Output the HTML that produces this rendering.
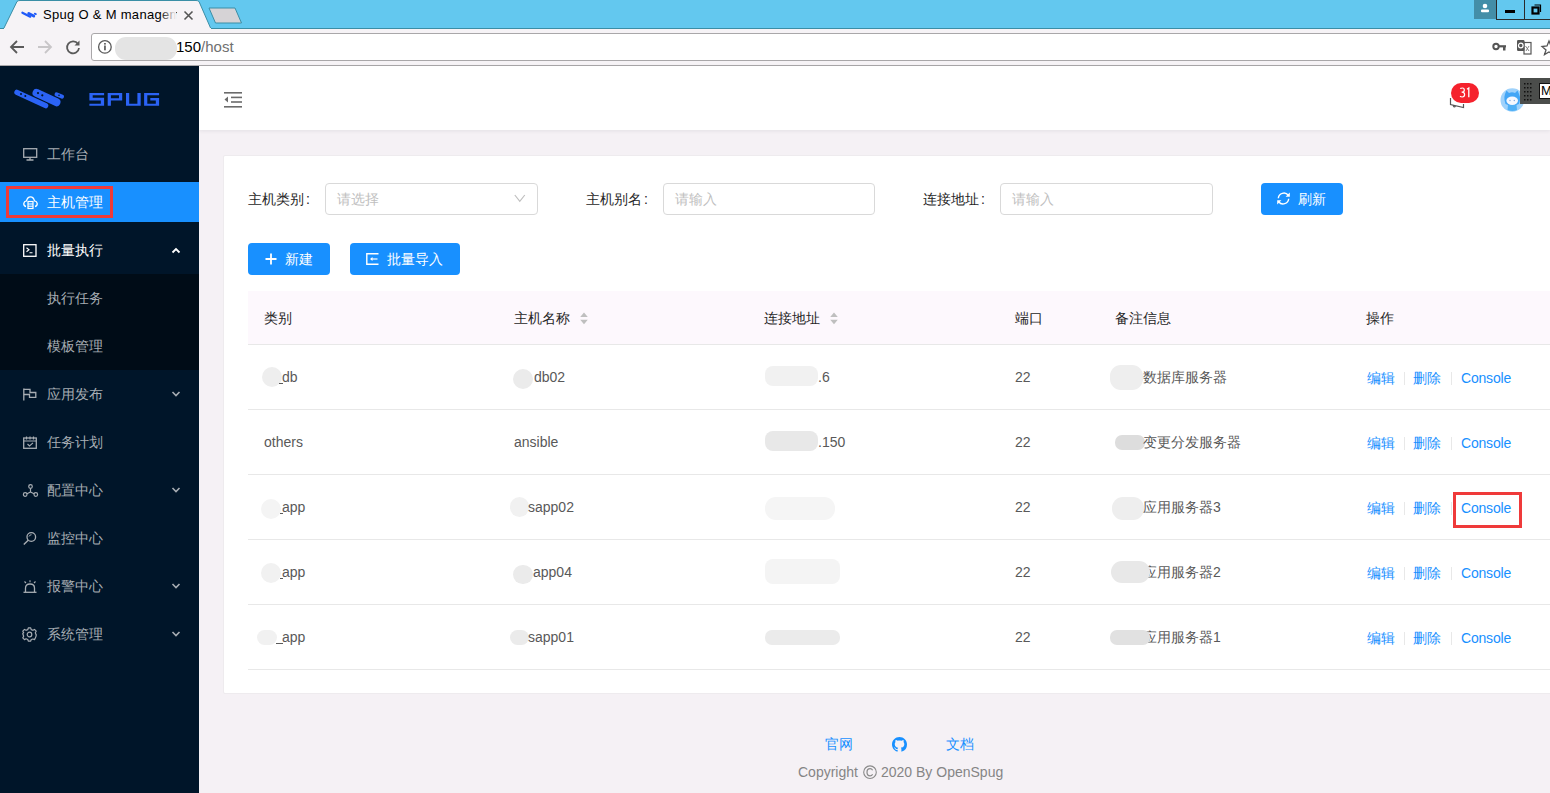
<!DOCTYPE html>
<html><head><meta charset="utf-8">
<style>
*{box-sizing:border-box;margin:0;padding:0}
html,body{width:1550px;height:793px;overflow:hidden;background:#f5f1f5;font-family:"Liberation Sans",sans-serif;font-size:14px;color:#333}
.a{position:absolute}
svg{position:absolute;overflow:visible}
#tabbar{left:0;top:0;width:1550px;height:29px;background:#63c8ef;border-bottom:1px solid #3a8ea6}
#toolbar{left:0;top:29px;width:1550px;height:37px;background:#f6f3f6;border-bottom:1px solid #aaa8aa}
#addr{left:91px;top:33px;width:1470px;height:28px;background:#fff;border:1px solid #a9a7a9;border-radius:3px}
#side{left:0;top:66px;width:199px;height:727px;background:#001529}
#sub{left:0;top:274px;width:199px;height:96px;background:#000c17}
#header{left:199px;top:66px;width:1351px;height:64px;background:#fff;box-shadow:0 1px 4px rgba(0,21,41,.08)}
#card{left:223px;top:155px;width:1340px;height:539px;background:#fff;border-radius:2px;border:1px solid #eeebee}
.mi{position:absolute;left:0;width:199px;height:40px;color:#a7adb3;font-size:14px}
.mi .t{position:absolute;left:47px;top:12px;line-height:16px;white-space:nowrap}
.sel{background:#1890ff;color:#fff}
.cell{position:absolute;line-height:16px;color:#595959;white-space:nowrap}
.hd{position:absolute;line-height:16px;color:#262626;white-space:nowrap;top:310px}
.lnk{color:#1890ff}
.hl{position:absolute;left:248px;width:1310px;height:1px;background:#e8e8e8}
.blur{position:absolute;background:#ececec;border-radius:10px}
</style></head><body>
<!-- browser chrome -->
<div id="tabbar" class="a"></div>
<svg style="left:0;top:0" width="260" height="30">
  <path d="M3.5 29 L17 1.5 Q18 0.5 20 0.5 L196 0.5 Q198 0.5 199 1.5 L211 29 Z" fill="#f6f3f6" stroke="#3a8ea6" stroke-width="1"/>
  <path d="M209 8 L235 8 L241.5 23 L215.5 23 Z" fill="#d6d3d6" stroke="#3a8ea6" stroke-width="1"/>
</svg>
<div id="toolbar" class="a"></div>
<div class="a" style="left:0;top:28px;width:1550px;height:1px;background:#3a8ea6"></div>
<div class="a" style="left:4px;top:28px;width:207px;height:2px;background:#f6f3f6"></div>
<!-- window controls -->
<div class="a" style="left:1474px;top:0;width:22px;height:19px;background:#438ea8"></div>
<svg style="left:1474px;top:0" width="22" height="19"><circle cx="11" cy="6" r="2.3" fill="#fff"/><rect x="7" y="9.5" width="8" height="2.8" rx="1" fill="#fff"/></svg>
<div class="a" style="left:1496px;top:0;width:60px;height:20px;border-left:1px solid #2a2a2a;border-bottom:1px solid #2a2a2a"></div>
<div class="a" style="left:1524px;top:0;width:1px;height:20px;background:#2a2a2a"></div>
<div class="a" style="left:1505px;top:10px;width:10px;height:3px;background:#000"></div>
<svg style="left:1530px;top:3px" width="16" height="14"><rect x="2.5" y="4.5" width="6" height="6" fill="none" stroke="#000" stroke-width="2.2"/><path d="M4.5 2 L10.5 2 L10.5 9" fill="none" stroke="#000" stroke-width="1.2"/></svg>
<!-- tab content -->
<svg style="left:20px;top:10px" width="18" height="10"><g fill="#1f5af8"><rect x="0.8" y="3.6" width="11" height="2.2" rx="1.1" transform="rotate(27 6.3 4.7)"/><rect x="7" y="3.2" width="8.5" height="3" rx="1.5" transform="rotate(27 11.2 4.7)"/><rect x="13.8" y="3" width="3" height="1.8" rx="0.9" transform="rotate(20 15.3 3.9)"/></g></svg>
<div class="a" style="left:43px;top:7px;font-size:13px;line-height:16px;color:#000;white-space:nowrap;width:134px;overflow:hidden;letter-spacing:0.3px">Spug O &amp; M management</div>
<div class="a" style="left:160px;top:6px;width:16px;height:18px;background:linear-gradient(90deg,rgba(246,243,246,0),#f6f3f6)"></div>
<svg style="left:184px;top:11px" width="9" height="9"><path d="M0.5 0.5 L8.5 8.5 M8.5 0.5 L0.5 8.5" stroke="#555" stroke-width="1.6"/></svg>
<!-- nav buttons -->
<svg style="left:9px;top:39px" width="17" height="16"><path d="M15 8 L2 8 M8 2 L2 8 L8 14" fill="none" stroke="#5a5a5a" stroke-width="1.8"/></svg>
<svg style="left:37px;top:39px" width="17" height="16"><path d="M1 8 L14 8 M8 2 L14 8 L8 14" fill="none" stroke="#c8c6c8" stroke-width="1.8"/></svg>
<svg style="left:65px;top:39px" width="17" height="16"><path d="M13 5 A6 6 0 1 0 14 9" fill="none" stroke="#5a5a5a" stroke-width="1.8"/><path d="M14.5 1.5 L14.5 6.5 L9.5 6.5 Z" fill="#5a5a5a"/></svg>
<div id="addr" class="a"></div>
<svg style="left:97px;top:39px" width="16" height="16"><circle cx="7.9" cy="7.9" r="6.3" fill="none" stroke="#5a5a5a" stroke-width="1.3"/><rect x="7.1" y="6.5" width="1.7" height="4.8" fill="#5a5a5a"/><rect x="7.1" y="4" width="1.7" height="1.6" fill="#5a5a5a"/></svg>
<div class="blur" style="left:115px;top:37px;width:62px;height:23px;background:#e4e4e4;border-radius:11px"></div>
<div class="a" style="left:176px;top:38px;font-size:15px;line-height:18px;color:#000">150<span style="color:#707070">/host</span></div>
<svg style="left:1490px;top:40px" width="18" height="14"><circle cx="6" cy="6.5" r="2.7" fill="none" stroke="#555" stroke-width="2"/><path d="M8.5 6.3 L16 6.3" stroke="#555" stroke-width="2.2"/><path d="M13 6 L13 10.5 L15.5 10.5 L15.5 6" fill="#555"/></svg>
<svg style="left:1516px;top:39px" width="17" height="17"><rect x="8" y="3.5" width="7" height="11.5" fill="#fff" stroke="#555" stroke-width="1.2"/><path d="M9.5 7 L13 12 M13 7 L10 12" stroke="#777" stroke-width="0.9"/><rect x="1" y="1" width="7.5" height="11" rx="1.2" fill="#555"/><circle cx="4.8" cy="6.5" r="2.3" fill="none" stroke="#fff" stroke-width="1.2"/></svg>
<svg style="left:1541px;top:40px" width="14" height="15"><path d="M8 1 L10 6 L15 6.5 L11 10 L12.5 14.5 L8 12 L3.5 14.5 L5 10 L1 6.5 L6 6 Z" fill="none" stroke="#555" stroke-width="1.3"/></svg>

<!-- sidebar -->
<div id="side" class="a"></div>
<div id="sub" class="a"></div>
<svg style="left:0;top:80px" width="170" height="35">
  <g fill="#2b63f5">
  <rect x="12.8" y="16.4" width="37" height="5.2" rx="2.6" transform="rotate(25 31.3 19)"/>
  <rect x="31.5" y="13.6" width="30" height="8" rx="4" transform="rotate(25 46.5 17.6)"/>
  <rect x="54.3" y="13.5" width="10" height="4" rx="2" transform="rotate(22 59.3 15.5)"/>
  </g>
  <g fill="#001529">
  <circle cx="21" cy="13.9" r="1"/><circle cx="25.3" cy="16" r="1"/>
  <circle cx="38" cy="13.1" r="1.1"/><circle cx="42.3" cy="15.3" r="1.1"/>
  <circle cx="59" cy="15.3" r="0.8"/>
  </g>
  <g fill="#2b63f5">
  <path d="M89.4 12.9 H104.1 V15.2 H92.7 V17.8 H104.1 V25.8 H89.4 V23.7 H100.8 V20.4 H89.4 Z"/>
  <path d="M107.7 12.9 H122.2 V20.6 H110.9 V25.8 H107.7 Z M110.9 15.2 V18.3 H119 V15.2 Z"/>
  <path d="M126 12.9 H129.2 V23.7 H137.4 V12.9 H140.7 V25.8 H126 Z"/>
  <path d="M144.1 12.9 H159.1 V15.2 H147.3 V23.7 H155.8 V20.4 H150.3 V18 H159.1 V25.8 H144.1 Z"/>
  </g>
</svg>
<div class="mi" style="top:134px"><span class="t">工作台</span></div>
<div class="mi sel" style="top:182px"><span class="t">主机管理</span></div>
<div class="a" style="left:6px;top:186px;width:107px;height:32px;border:3px solid #ef3a3a"></div>
<div class="mi" style="top:230px;color:#fff"><span class="t">批量执行</span></div>
<div class="mi" style="top:278px"><span class="t">执行任务</span></div>
<div class="mi" style="top:326px"><span class="t">模板管理</span></div>
<div class="mi" style="top:374px"><span class="t">应用发布</span></div>
<div class="mi" style="top:422px"><span class="t">任务计划</span></div>
<div class="mi" style="top:470px"><span class="t">配置中心</span></div>
<div class="mi" style="top:518px"><span class="t">监控中心</span></div>
<div class="mi" style="top:566px"><span class="t">报警中心</span></div>
<div class="mi" style="top:614px"><span class="t">系统管理</span></div>


<!-- sidebar icons -->
<svg style="left:23px;top:148px" width="15" height="13"><rect x="0.7" y="0.7" width="13" height="8.6" fill="none" stroke="#a7adb3" stroke-width="1.3"/><path d="M7 9.5 L7 11.5 M3.5 12 L10.5 12" stroke="#a7adb3" stroke-width="1.3"/></svg>
<svg style="left:23px;top:196px" width="15" height="13"><path d="M3 10.5 Q0.5 10 0.8 7.3 Q1.2 5 3.5 4.8 Q4.5 0.8 7.5 0.8 Q10.5 0.8 11.5 4.8 Q13.8 5 14.2 7.3 Q14.5 10 12 10.5" fill="none" stroke="#fff" stroke-width="1.3"/><rect x="5" y="5.5" width="5" height="7" fill="none" stroke="#fff" stroke-width="1.2"/><path d="M5 8 L10 8 M5 10.2 L10 10.2" stroke="#fff" stroke-width="1"/></svg>
<svg style="left:23px;top:244px" width="14" height="13"><rect x="0.7" y="0.7" width="12.3" height="11.6" fill="none" stroke="#fff" stroke-width="1.3"/><path d="M3.5 3.8 L6 5.8 L3.5 7.8 M6.5 8.8 L9.5 8.8" fill="none" stroke="#fff" stroke-width="1.1"/></svg>
<svg style="left:23px;top:388px" width="14" height="13"><path d="M0.8 0.5 L0.8 12.5" stroke="#a7adb3" stroke-width="1.3"/><path d="M0.8 1.3 L7 1.3 L7 4.5 L12.8 4.5 L12.8 9.3 L6.5 9.3 L6.5 6.5 L0.8 6.5" fill="none" stroke="#a7adb3" stroke-width="1.3"/></svg>
<svg style="left:23px;top:436px" width="14" height="13"><rect x="0.7" y="2" width="12.6" height="10.3" fill="none" stroke="#a7adb3" stroke-width="1.3"/><path d="M0.7 5 L13.3 5 M3.5 0.5 L3.5 3.5 M7 0.5 L7 3.5 M10.5 0.5 L10.5 3.5" stroke="#a7adb3" stroke-width="1.2"/><path d="M4.5 8 L6.5 10 L10 6.8" fill="none" stroke="#a7adb3" stroke-width="1.1"/></svg>
<svg style="left:23px;top:484px" width="15" height="13"><circle cx="7.5" cy="2.5" r="1.8" fill="none" stroke="#a7adb3" stroke-width="1.2"/><circle cx="2.2" cy="10.5" r="1.8" fill="none" stroke="#a7adb3" stroke-width="1.2"/><circle cx="12.8" cy="10.5" r="1.8" fill="none" stroke="#a7adb3" stroke-width="1.2"/><path d="M7.5 4.3 L7.5 8 M7.5 8 L4 9.8 M7.5 8 L11 9.8" stroke="#a7adb3" stroke-width="1.2"/></svg>
<svg style="left:23px;top:532px" width="14" height="13"><circle cx="8.3" cy="5" r="4.3" fill="none" stroke="#a7adb3" stroke-width="1.3"/><path d="M5.2 8.2 L0.8 12.5" stroke="#a7adb3" stroke-width="1.4"/><path d="M6 4.5 Q6.5 2.8 8.5 2.7" fill="none" stroke="#a7adb3" stroke-width="1"/></svg>
<svg style="left:23px;top:580px" width="14" height="13"><path d="M2.5 12 L2.5 8 Q2.5 4 7 4 Q11.5 4 11.5 8 L11.5 12" fill="none" stroke="#a7adb3" stroke-width="1.3"/><path d="M0.5 12.3 L13.5 12.3" stroke="#a7adb3" stroke-width="1.3"/><path d="M7 0.3 L7 2.3 M1.5 1.5 L3 3 M12.5 1.5 L11 3" stroke="#a7adb3" stroke-width="1.1"/></svg>
<svg style="left:22px;top:627px" width="15" height="15"><path d="M7.5 1.2 L9 1.2 L9.5 3 L11.2 3.8 L12.8 2.8 L13.9 3.9 L12.9 5.6 L13.6 7.3 L15.3 7.8 L15.3 9.3" fill="none" stroke="none"/><circle cx="7.5" cy="7.5" r="2.3" fill="none" stroke="#a7adb3" stroke-width="1.2"/><path d="M6.3 0.8 L8.7 0.8 L9.2 2.6 L10.9 3.3 L12.5 2.4 L14.2 4.1 L13.3 5.7 L14 7.4 L14.2 7.5 L14.2 8.3 L13.9 9.5 L13.3 11 L12.6 12.6 L10.9 12 L9.2 12.5 L8.7 14.2 L6.3 14.2 L5.8 12.5 L4.1 11.8 L2.5 12.6 L0.8 10.9 L1.7 9.3 L1 7.6 L0.8 6.3 L1.7 5.7 L0.8 4.1 L2.5 2.4 L4.1 3.3 L5.8 2.6 Z" fill="none" stroke="#a7adb3" stroke-width="1.2" stroke-linejoin="round"/></svg>
<!-- arrows -->
<svg style="left:171px;top:247px" width="10" height="8"><path d="M1.5 5.5 L5 2 L8.5 5.5" fill="none" stroke="#fff" stroke-width="1.8"/></svg>
<svg style="left:171px;top:390px" width="10" height="8"><path d="M1.5 2 L5 5.5 L8.5 2" fill="none" stroke="#a7adb3" stroke-width="1.6"/></svg>
<svg style="left:171px;top:486px" width="10" height="8"><path d="M1.5 2 L5 5.5 L8.5 2" fill="none" stroke="#a7adb3" stroke-width="1.6"/></svg>
<svg style="left:171px;top:582px" width="10" height="8"><path d="M1.5 2 L5 5.5 L8.5 2" fill="none" stroke="#a7adb3" stroke-width="1.6"/></svg>
<svg style="left:171px;top:630px" width="10" height="8"><path d="M1.5 2 L5 5.5 L8.5 2" fill="none" stroke="#a7adb3" stroke-width="1.6"/></svg>

<!-- header -->
<div id="header" class="a"></div>
<svg style="left:224px;top:92px" width="19" height="16"><g fill="#6b6b6b"><rect x="0" y="0" width="18" height="1.6"/><rect x="7" y="4.6" width="11" height="1.6"/><rect x="7" y="9.2" width="11" height="1.6"/><rect x="0" y="14" width="18" height="1.6"/><path d="M0.5 7.5 L4 4.6 L4 10.4 Z"/></g></svg>
<svg style="left:1448px;top:92px" width="20" height="18"><path d="M2.5 6 L2.5 12.5 L15.5 15.5 L15.5 12 M5 13 Q5.5 15.5 7.5 14.5" fill="none" stroke="#555" stroke-width="1.2"/></svg>
<div class="a" style="left:1451px;top:83px;width:28px;height:20px;border-radius:10px;background:#f5222d;color:#fff;font-size:12px;line-height:20px;text-align:center"></div>
<svg style="left:1451px;top:83px" width="28" height="20"><path d="M9.2 5.6 Q10 5 11.5 5 Q13.3 5 13.3 7 Q13.3 9.2 11 9.2 H10.6 M11 9.2 Q13.6 9.2 13.6 11.6 Q13.6 14 11.3 14 Q9.9 14 9 13.3" fill="none" stroke="#fff" stroke-width="1.2"/><path d="M16 6.3 L17.8 5 V14.2" fill="none" stroke="#fff" stroke-width="1.3"/></svg>
<svg style="left:1500px;top:88px" width="25" height="25"><circle cx="12.3" cy="12" r="11.8" fill="#9fd2fb"/><path d="M5 6 L6.5 2.5 L9 5 Q12 3.5 15 5 L17.5 2.5 L19 6 Q20.5 9 20 12 L19 16 Q12 19 5.5 16 L4.5 12 Q4 9 5 6 Z" fill="#43a6f6"/><ellipse cx="12.2" cy="12.8" rx="5.8" ry="4.2" fill="#f5f8fe"/><circle cx="10" cy="12.5" r="0.7" fill="#7fa8e0"/><circle cx="14.3" cy="12.5" r="0.7" fill="#7fa8e0"/><path d="M8 17 L16.5 17 L17 22 Q12.5 24 7.5 22 Z" fill="#4fb0f6"/></svg>
<div class="a" style="left:1520px;top:78px;width:30px;height:26px;background:#4b4d4b"></div>
<svg style="left:1523px;top:82px" width="10" height="19"><g fill="#111">
<rect x="1" y="1" width="1.5" height="1.5"/><rect x="4" y="1" width="1.5" height="1.5"/><rect x="7" y="1" width="1.5" height="1.5"/>
<rect x="1" y="5" width="1.5" height="1.5"/><rect x="4" y="5" width="1.5" height="1.5"/><rect x="7" y="5" width="1.5" height="1.5"/>
<rect x="1" y="9" width="1.5" height="1.5"/><rect x="4" y="9" width="1.5" height="1.5"/><rect x="7" y="9" width="1.5" height="1.5"/>
<rect x="1" y="13" width="1.5" height="1.5"/><rect x="4" y="13" width="1.5" height="1.5"/><rect x="7" y="13" width="1.5" height="1.5"/>
<rect x="1" y="17" width="1.5" height="1.5"/><rect x="4" y="17" width="1.5" height="1.5"/><rect x="7" y="17" width="1.5" height="1.5"/></g></svg>
<div class="a" style="left:1539px;top:83px;width:14px;height:16px;background:#fff;border:1px solid #111;font-size:13px;line-height:14px;color:#000;padding-left:1px">M</div>

<!-- content -->
<div id="card" class="a"></div>
<div class="a" style="left:248px;top:191px;line-height:16px;color:#262626">主机类别<span style="margin-left:2px">:</span></div>
<div class="a" style="left:325px;top:183px;width:213px;height:32px;border:1px solid #d9d9d9;border-radius:4px;background:#fff"></div>
<div class="a" style="left:337px;top:191px;line-height:16px;color:#bfbfbf">请选择</div>
<svg style="left:514px;top:194px" width="12" height="9"><path d="M0.8 1 L5.8 7.3 L10.8 1" fill="none" stroke="#bfbfbf" stroke-width="1.2"/></svg>
<div class="a" style="left:586px;top:191px;line-height:16px;color:#262626">主机别名<span style="margin-left:2px">:</span></div>
<div class="a" style="left:663px;top:183px;width:212px;height:32px;border:1px solid #d9d9d9;border-radius:4px;background:#fff"></div>
<div class="a" style="left:675px;top:191px;line-height:16px;color:#bfbfbf">请输入</div>
<div class="a" style="left:923px;top:191px;line-height:16px;color:#262626">连接地址<span style="margin-left:2px">:</span></div>
<div class="a" style="left:1000px;top:183px;width:213px;height:32px;border:1px solid #d9d9d9;border-radius:4px;background:#fff"></div>
<div class="a" style="left:1012px;top:191px;line-height:16px;color:#bfbfbf">请输入</div>
<div class="a" style="left:1261px;top:183px;width:82px;height:32px;border-radius:4px;background:#1890ff"></div>
<svg style="left:1276px;top:191px" width="16" height="16"><path d="M12.3 4.3 A5.6 5.6 0 0 0 2.3 7.2" fill="none" stroke="#fff" stroke-width="1.4"/><path d="M2.7 10.7 A5.6 5.6 0 0 0 12.7 7.8" fill="none" stroke="#fff" stroke-width="1.4"/><path d="M13.8 1.5 L13.8 5.8 L9.6 5.8 Z" fill="#fff"/><path d="M1.2 13.5 L1.2 9.2 L5.4 9.2 Z" fill="#fff"/></svg>
<div class="a" style="left:1298px;top:191px;line-height:16px;color:#fff">刷新</div>

<div class="a" style="left:248px;top:243px;width:82px;height:32px;border-radius:4px;background:#1890ff"></div>
<svg style="left:265px;top:253px" width="13" height="13"><path d="M6 0.5 L6 11.5 M0.5 6 L11.5 6" stroke="#fff" stroke-width="1.8"/></svg>
<div class="a" style="left:285px;top:251px;line-height:16px;color:#fff">新建</div>
<div class="a" style="left:350px;top:243px;width:110px;height:32px;border-radius:4px;background:#1890ff"></div>
<svg style="left:366px;top:253px" width="14" height="13"><path d="M12.5 0.8 L0.8 0.8 L0.8 11.2 L12.5 11.2" fill="none" stroke="#fff" stroke-width="1.4"/><path d="M11.5 6 L5.5 6" stroke="#fff" stroke-width="1.2"/><path d="M4 6 L6.5 4 L6.5 8 Z" fill="#fff"/></svg>
<div class="a" style="left:387px;top:251px;line-height:16px;color:#fff">批量导入</div>

<!-- blurs -->
<div class="blur" style="left:262px;top:367px;width:20px;height:20px;border-radius:10px;background:#eeeeee"></div>
<div class="blur" style="left:513px;top:369px;width:20px;height:20px;border-radius:10px;background:#ebebeb"></div>
<div class="blur" style="left:765px;top:366px;width:53px;height:20px;border-radius:8px;background:#f1f1f1"></div>
<div class="blur" style="left:1110px;top:365px;width:33px;height:25px;border-radius:11px;background:#eeeeee"></div>
<div class="blur" style="left:765px;top:431px;width:53px;height:20px;border-radius:8px;background:#e8e8e8"></div>
<div class="blur" style="left:1115px;top:435px;width:30px;height:15px;border-radius:7px;background:#dddddd"></div>
<div class="blur" style="left:261px;top:499px;width:20px;height:20px;border-radius:10px;background:#f4f4f4"></div>
<div class="blur" style="left:510px;top:497px;width:19px;height:20px;border-radius:10px;background:#f1f1f1"></div>
<div class="blur" style="left:765px;top:497px;width:70px;height:23px;border-radius:11px;background:#f5f5f5"></div>
<div class="blur" style="left:1112px;top:497px;width:32px;height:23px;border-radius:11px;background:#eeeeee"></div>
<div class="blur" style="left:261px;top:563px;width:20px;height:20px;border-radius:10px;background:#f1f1f1"></div>
<div class="blur" style="left:513px;top:565px;width:20px;height:19px;border-radius:10px;background:#ebebeb"></div>
<div class="blur" style="left:765px;top:559px;width:75px;height:25px;border-radius:8px;background:#f4f4f4"></div>
<div class="blur" style="left:257px;top:630px;width:20px;height:15px;border-radius:8px;background:#f1f1f1"></div>
<div class="blur" style="left:510px;top:630px;width:19px;height:15px;border-radius:8px;background:#ebebeb"></div>
<div class="blur" style="left:765px;top:630px;width:75px;height:15px;border-radius:7px;background:#ebebeb"></div>

<!-- table -->
<div class="a" style="left:248px;top:291px;width:1310px;height:53px;background:#fdf8fd"></div>
<div class="hl" style="top:344px"></div>
<div class="hl" style="top:409px"></div>
<div class="hl" style="top:474px"></div>
<div class="hl" style="top:539px"></div>
<div class="hl" style="top:604px"></div>
<div class="hl" style="top:669px"></div>
<div class="hd" style="left:264px">类别</div>
<div class="hd" style="left:514px">主机名称</div>
<svg style="left:580px;top:312px" width="9" height="13"><path d="M4 0.6 L7.8 5 L0.2 5 Z M4 12.2 L7.8 7.7 L0.2 7.7 Z" fill="#bfbfbf"/></svg>
<div class="hd" style="left:764px">连接地址</div>
<svg style="left:830px;top:312px" width="9" height="13"><path d="M4 0.6 L7.8 5 L0.2 5 Z M4 12.2 L7.8 7.7 L0.2 7.7 Z" fill="#bfbfbf"/></svg>
<div class="hd" style="left:1015px">端口</div>
<div class="hd" style="left:1115px">备注信息</div>
<div class="hd" style="left:1366px">操作</div>
<div class="cell" style="left:282px;top:369px">db</div>
<div class="a" style="left:279px;top:383px;width:4px;height:1px;background:#5a5a5a"></div>
<div class="cell" style="left:534px;top:369px">db02</div>
<div class="cell" style="left:818px;top:369px">.6</div>
<div class="cell" style="left:1015px;top:369px">22</div>
<div class="cell" style="left:1143px;top:369px">数据库服务器</div>
<div class="cell lnk" style="left:1367px;margin-top:1px;top:369px">编辑</div>
<div class="a" style="left:1404px;top:372px;width:1px;height:13px;background:#e8e8e8"></div>
<div class="cell lnk" style="left:1413px;margin-top:1px;top:369px">删除</div>
<div class="a" style="left:1451px;top:372px;width:1px;height:13px;background:#e8e8e8"></div>
<div class="cell lnk" style="left:1461px;margin-top:1px;top:369px;letter-spacing:-0.2px">Console</div>
<div class="cell" style="left:264px;top:434px">others</div>
<div class="cell" style="left:514px;top:434px">ansible</div>
<div class="cell" style="left:818px;top:434px">.150</div>
<div class="cell" style="left:1015px;top:434px">22</div>
<div class="cell" style="left:1143px;top:434px">变更分发服务器</div>
<div class="cell lnk" style="left:1367px;margin-top:1px;top:434px">编辑</div>
<div class="a" style="left:1404px;top:437px;width:1px;height:13px;background:#e8e8e8"></div>
<div class="cell lnk" style="left:1413px;margin-top:1px;top:434px">删除</div>
<div class="a" style="left:1451px;top:437px;width:1px;height:13px;background:#e8e8e8"></div>
<div class="cell lnk" style="left:1461px;margin-top:1px;top:434px;letter-spacing:-0.2px">Console</div>
<div class="cell" style="left:282px;top:499px">app</div>
<div class="a" style="left:280px;top:513px;width:3px;height:1px;background:#5a5a5a"></div>
<div class="cell" style="left:528px;top:499px">sapp02</div>
<div class="cell" style="left:818px;top:499px"></div>
<div class="cell" style="left:1015px;top:499px">22</div>
<div class="cell" style="left:1143px;top:499px">应用服务器3</div>
<div class="cell lnk" style="left:1367px;margin-top:1px;top:499px">编辑</div>
<div class="a" style="left:1404px;top:502px;width:1px;height:13px;background:#e8e8e8"></div>
<div class="cell lnk" style="left:1413px;margin-top:1px;top:499px">删除</div>
<div class="a" style="left:1451px;top:502px;width:1px;height:13px;background:#e8e8e8"></div>
<div class="cell lnk" style="left:1461px;margin-top:1px;top:499px;letter-spacing:-0.2px">Console</div>
<div class="cell" style="left:282px;top:564px">app</div>
<div class="a" style="left:280px;top:578px;width:3px;height:1px;background:#5a5a5a"></div>
<div class="cell" style="left:533px;top:564px">app04</div>
<div class="cell" style="left:818px;top:564px"></div>
<div class="cell" style="left:1015px;top:564px">22</div>
<div class="cell" style="left:1143px;top:564px">应用服务器2</div>
<div class="cell lnk" style="left:1367px;margin-top:1px;top:564px">编辑</div>
<div class="a" style="left:1404px;top:567px;width:1px;height:13px;background:#e8e8e8"></div>
<div class="cell lnk" style="left:1413px;margin-top:1px;top:564px">删除</div>
<div class="a" style="left:1451px;top:567px;width:1px;height:13px;background:#e8e8e8"></div>
<div class="cell lnk" style="left:1461px;margin-top:1px;top:564px;letter-spacing:-0.2px">Console</div>
<div class="cell" style="left:282px;top:629px">app</div>
<div class="a" style="left:276px;top:643px;width:7px;height:1px;background:#5a5a5a"></div>
<div class="cell" style="left:528px;top:629px">sapp01</div>
<div class="cell" style="left:818px;top:629px"></div>
<div class="cell" style="left:1015px;top:629px">22</div>
<div class="cell" style="left:1143px;top:629px">应用服务器1</div>
<div class="cell lnk" style="left:1367px;margin-top:1px;top:629px">编辑</div>
<div class="a" style="left:1404px;top:632px;width:1px;height:13px;background:#e8e8e8"></div>
<div class="cell lnk" style="left:1413px;margin-top:1px;top:629px">删除</div>
<div class="a" style="left:1451px;top:632px;width:1px;height:13px;background:#e8e8e8"></div>
<div class="cell lnk" style="left:1461px;margin-top:1px;top:629px;letter-spacing:-0.2px">Console</div>
<div class="a" style="left:1453px;top:492px;width:69px;height:36px;border:3px solid #ef3a3a"></div>
<div class="blur" style="left:1111px;top:561px;width:39px;height:22px;border-radius:11px;background:#e8e8e8"></div>
<div class="blur" style="left:1110px;top:630px;width:40px;height:15px;border-radius:7px;background:#e1e1e1"></div>
<!-- footer -->
<div class="a lnk" style="left:825px;top:736px;line-height:16px">官网</div>
<svg style="left:892px;top:737px" width="15" height="15" viewBox="0 0 16 16"><path fill="#1890ff" d="M8 0C3.58 0 0 3.58 0 8c0 3.54 2.29 6.53 5.47 7.59.4.07.55-.17.55-.38 0-.19-.01-.82-.01-1.49-2.01.37-2.53-.49-2.69-.94-.09-.23-.48-.94-.82-1.13-.28-.15-.68-.52-.01-.53.63-.01 1.08.58 1.23.82.72 1.21 1.87.87 2.33.66.07-.52.28-.87.51-1.07-1.78-.2-3.640-.89-3.64-3.950 0-.87.31-1.59.82-2.15-.08-.2-.36-1.02.08-2.12 0 0 .67-.21 2.2.82.64-.18 1.32-.27 2-.27.68 0 1.36.09 2 .27 1.53-1.04 2.2-.82 2.2-.82.44 1.1.16 1.92.08 2.12.51.56.82 1.27.82 2.15 0 3.07-1.87 3.75-3.65 3.95.29.25.54.73.54 1.48 0 1.07-.01 1.93-.01 2.200 0 .21.15.46.55.38A8.013 8.013 0 0016 8c0-4.42-3.58-8-8-8z"/></svg>
<div class="a lnk" style="left:946px;top:736px;line-height:16px">文档</div>
<div class="a" style="left:798px;top:764px;line-height:16px;color:#858585;white-space:nowrap">Copyright</div>
<svg style="left:863px;top:765px" width="15" height="15"><circle cx="7" cy="7.2" r="6.3" fill="none" stroke="#8a8a8a" stroke-width="1.1"/><path d="M9.6 5.2 Q8.8 3.6 7.1 3.6 Q4 3.6 4 7.2 Q4 10.8 7.1 10.8 Q8.8 10.8 9.6 9.2" fill="none" stroke="#8a8a8a" stroke-width="1.2"/></svg>
<div class="a" style="left:881px;top:764px;line-height:16px;color:#858585;white-space:nowrap">2020 By OpenSpug</div>
</body></html>
